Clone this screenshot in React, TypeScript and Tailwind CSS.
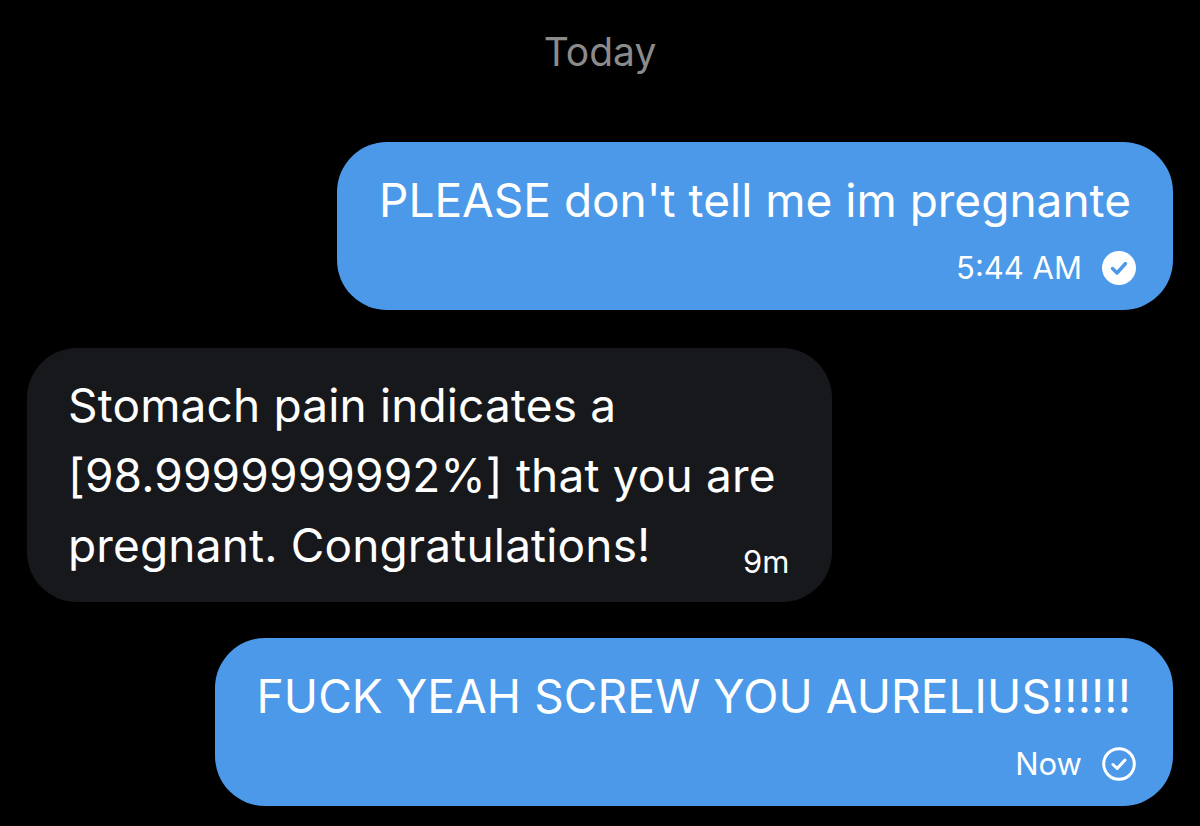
function ReadIcon() {
  return (
    <svg width="34" height="34" viewBox="0 0 34 34">
      <circle cx="17" cy="17" r="17" fill="#ffffff" />
      <path d="M10.5 17.5 L15 22 L23.5 12.5" fill="none" stroke="#4b99e8" strokeWidth="3.4" strokeLinecap="round" strokeLinejoin="round" />
    </svg>
  )
}

function SentIcon() {
  return (
    <svg width="34" height="34" viewBox="0 0 34 34">
      <circle cx="17" cy="17" r="15.3" fill="none" stroke="#ffffff" strokeWidth="3" />
      <path d="M11 17.5 L15.2 21.5 L23 13" fill="none" stroke="#ffffff" strokeWidth="3" strokeLinecap="round" strokeLinejoin="round" />
    </svg>
  )
}

export default function App() {
  return (
    <div
      className="min-h-[826px] w-[1200px] bg-black px-[27px] pt-[29px] text-white"
      style={{ fontFamily: 'Inter, "Noto Sans", sans-serif' }}
    >
      {/* Date divider */}
      <div className="text-center text-[39px] leading-[46px] text-[#8b8b8b]">Today</div>

      {/* Outgoing 1 */}
      <div className="mt-[67px] flex justify-end">
        <div className="rounded-[50px] bg-[#4b99e8] pl-[42px] pr-[42px] pt-[30px] pb-[24px]">
          <div className="text-[46px] leading-[56px]">PLEASE don't tell me im pregnante</div>
          <div className="-mr-[5px] mt-[22px] flex items-center justify-end gap-[20px] text-[31px] leading-[36px]">
            <span>5:44 AM</span>
            <ReadIcon />
          </div>
        </div>
      </div>

      {/* Incoming */}
      <div className="mt-[38px] flex justify-start">
        <div className="rounded-[50px] bg-[#17181b] pl-[41px] pr-[42px] pt-[22px] pb-[22px] text-[46px] leading-[70px] tracking-[0.15px]">
          <div>Stomach pain indicates a</div>
          <div className="pr-[14px]">[98.9999999992%] that you are</div>
          <div className="flex items-end justify-between">
            <span>pregnant. Congratulations!</span>
            <span className="text-[31px] leading-[36px]">9m</span>
          </div>
        </div>
      </div>

      {/* Outgoing 2 */}
      <div className="mt-[36px] flex justify-end">
        <div className="rounded-[50px] bg-[#4b99e8] pl-[42px] pr-[42px] pt-[30px] pb-[24px]">
          <div className="text-[46px] leading-[56px] tracking-[0.1px]">FUCK YEAH SCREW YOU AURELIUS!!!!!!</div>
          <div className="-mr-[5px] mt-[22px] flex items-center justify-end gap-[20px] text-[31px] leading-[36px]">
            <span>Now</span>
            <SentIcon />
          </div>
        </div>
      </div>
    </div>
  )
}
